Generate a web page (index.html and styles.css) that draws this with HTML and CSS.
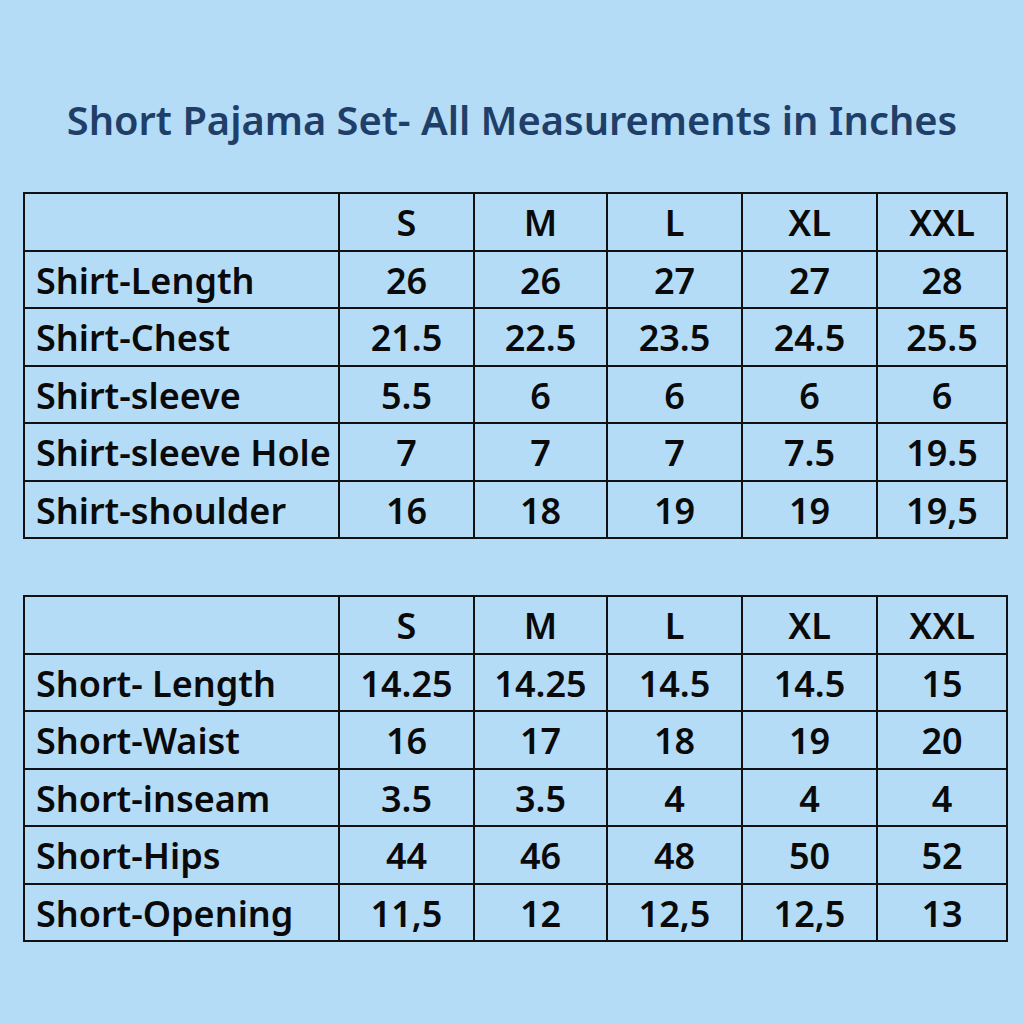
FILE: index.html
```html
<!DOCTYPE html>
<html>
<head>
<meta charset="utf-8">
<link rel="stylesheet" href="styles.css">
</head>
<body>
<div class="page">
  <h1 class="title">Short Pajama Set- All Measurements in Inches</h1>
  <table class="size-table">
    <colgroup><col class="c-label"><col class="c-s"><col class="c-m"><col class="c-l"><col class="c-xl"><col class="c-xxl"></colgroup>
    <tr class="head"><td></td><td>S</td><td>M</td><td>L</td><td>XL</td><td>XXL</td></tr>
    <tr><td>Shirt-Length</td><td>26</td><td>26</td><td>27</td><td>27</td><td>28</td></tr>
    <tr><td>Shirt-Chest</td><td>21.5</td><td>22.5</td><td>23.5</td><td>24.5</td><td>25.5</td></tr>
    <tr><td>Shirt-sleeve</td><td>5.5</td><td>6</td><td>6</td><td>6</td><td>6</td></tr>
    <tr><td>Shirt-sleeve Hole</td><td>7</td><td>7</td><td>7</td><td>7.5</td><td>19.5</td></tr>
    <tr><td>Shirt-shoulder</td><td>16</td><td>18</td><td>19</td><td>19</td><td>19,5</td></tr>
  </table>
  <table class="size-table second">
    <colgroup><col class="c-label"><col class="c-s"><col class="c-m"><col class="c-l"><col class="c-xl"><col class="c-xxl"></colgroup>
    <tr class="head"><td></td><td>S</td><td>M</td><td>L</td><td>XL</td><td>XXL</td></tr>
    <tr><td>Short- Length</td><td>14.25</td><td>14.25</td><td>14.5</td><td>14.5</td><td>15</td></tr>
    <tr><td>Short-Waist</td><td>16</td><td>17</td><td>18</td><td>19</td><td>20</td></tr>
    <tr><td>Short-inseam</td><td>3.5</td><td>3.5</td><td>4</td><td>4</td><td>4</td></tr>
    <tr><td>Short-Hips</td><td>44</td><td>46</td><td>48</td><td>50</td><td>52</td></tr>
    <tr><td>Short-Opening</td><td>11,5</td><td>12</td><td>12,5</td><td>12,5</td><td>13</td></tr>
  </table>
</div>
</body>
</html>
```
FILE: styles.css
```css
html, body {
  margin: 0;
  padding: 0;
  background: #b5dcf6;
}
.page {
  width: 1024px;
  height: 1024px;
  box-sizing: border-box;
  padding: 95px 0 0 23px;
}
.title {
  margin: 0 0 0 -23px;
  width: 1024px;
  text-align: center;
  font-family: "Noto Sans", sans-serif;
  font-weight: 600;
  font-size: 39.8px;
  line-height: 50px;
  color: #1f3f68;
  letter-spacing: 0;
}
.size-table {
  margin-top: 47px;
  border-collapse: collapse;
  table-layout: fixed;
  width: 984px;
  font-family: "Noto Sans", sans-serif;
  font-weight: 600;
  font-size: 36px;
  color: #0a0a0a;
}
.size-table.second {
  margin-top: 56px;
}
.c-label { width: 315px; }
.c-s { width: 135px; }
.c-m { width: 133px; }
.c-l { width: 135px; }
.c-xl { width: 135px; }
.c-xxl { width: 130px; }
.size-table td {
  border: 2px solid #111;
  height: 52.5px;
  padding: 3px 0 0 0;
  text-align: center;
  white-space: nowrap;
  line-height: 52px;
}
.size-table td:first-child {
  text-align: left;
  padding-left: 11px;
}
```
